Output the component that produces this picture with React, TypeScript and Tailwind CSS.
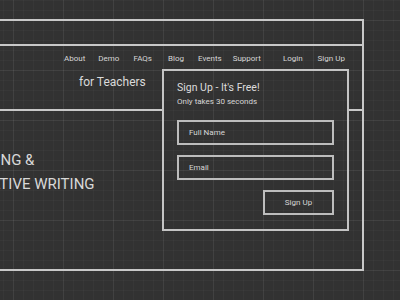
const grid =
  'bg-fixed bg-[#323232] bg-[linear-gradient(to_right,rgba(255,255,255,0.05)_1px,transparent_1px),linear-gradient(to_bottom,rgba(255,255,255,0.05)_1px,transparent_1px),linear-gradient(to_right,rgba(255,255,255,0.022)_1px,transparent_1px),linear-gradient(to_bottom,rgba(255,255,255,0.022)_1px,transparent_1px)] bg-[size:50px_50px,50px_50px,10px_10px,10px_10px] bg-[position:13px_20px,13px_20px,3px_0px,3px_0px]'

const navItems = [
  { label: 'About', gap: 'ml-0' },
  { label: 'Demo', gap: 'ml-[13px]' },
  { label: 'FAQs', gap: 'ml-[14px]' },
  { label: 'Blog', gap: 'ml-[16px]' },
  { label: 'Events', gap: 'ml-[14px]' },
  { label: 'Support', gap: 'ml-[11px]' },
  { label: 'Login', gap: 'ml-[22px]' },
  { label: 'Sign Up', gap: 'ml-[15px]' },
]

function SignUpForm() {
  return (
    <div className={`absolute left-[260px] top-[48px] w-[187px] h-[162px] border-2 border-[#c4c4c4] px-[13px] pt-[11px] flex flex-col ${grid}`}>
      <div className="text-[10.5px] leading-[12px] text-[#dcdcdc]">Sign Up - It's Free!</div>
      <div className="mt-[3px] text-[8px] leading-[10px] text-[#d6d6d6]">Only takes 30 seconds</div>
      <div className="mt-[13px] h-[25px] border-2 border-[#bdbdbd] flex items-center pl-[10px] text-[8px] text-[#d6d6d6]">Full Name</div>
      <div className="mt-[10px] h-[25px] border-2 border-[#bdbdbd] flex items-center pl-[10px] text-[8px] text-[#d6d6d6]">Email</div>
      <div className="mt-[10px] self-end w-[71px] h-[25px] border-2 border-[#bdbdbd] flex items-center justify-center text-[8px] text-[#d6d6d6]">Sign Up</div>
    </div>
  )
}

export default function App() {
  return (
    <div className={`w-[400px] h-[300px] overflow-hidden pt-[19px] font-['Roboto',sans-serif] ${grid}`}>
      <div className="relative ml-[-100px] w-[464px] h-[252px] border-2 border-[#c8c8c8]">
        <div className="h-[25px] border-b-2 border-[#c8c8c8]" />
        <div className="h-[65px] border-b-2 border-[#c8c8c8]">
          <nav className="flex pl-[162px] pt-[8px] text-[8px] leading-[10px] text-[#d6d6d6] whitespace-nowrap">
            {navItems.map((item) => (
              <span key={item.label} className={item.gap}>{item.label}</span>
            ))}
          </nav>
          <div className="mt-[11px] pl-[177px] text-[12px] leading-[14px] text-[#dadada]">for Teachers</div>
        </div>
        <div className="pl-[61px] pt-[37px] text-[15px] leading-[24px] text-[#d8d8d8] whitespace-nowrap">
          <div className="-ml-[4px]">READING &amp;</div>
          <div>CREATIVE WRITING</div>
        </div>
        <SignUpForm />
      </div>
    </div>
  )
}
